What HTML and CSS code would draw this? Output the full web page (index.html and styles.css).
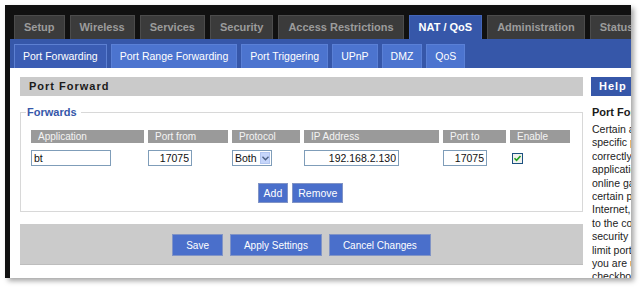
FILE: index.html
```html
<!DOCTYPE html>
<html lang="en">
  <head>
    <meta charset="UTF-8" />
    <title>NAT / QoS - Port Forwarding</title>
    <link rel="stylesheet" href="styles.css">
  </head>
  <body>
    <div class="window">
      <div class="tabs">
        <span class="tab">Setup</span>
        <span class="tab">Wireless</span>
        <span class="tab">Services</span>
        <span class="tab">Security</span>
        <span class="tab">Access Restrictions</span>
        <span class="tab tab-active">NAT / QoS</span>
        <span class="tab">Administration</span>
        <span class="tab">Status</span>
      </div>

      <div class="subtabs">
        <span class="subtab subtab-active">Port Forwarding</span>
        <span class="subtab">Port Range Forwarding</span>
        <span class="subtab">Port Triggering</span>
        <span class="subtab">UPnP</span>
        <span class="subtab">DMZ</span>
        <span class="subtab">QoS</span>
      </div>

      <div class="content">
        <div class="main">
          <h2 class="main-title">Port Forward</h2>

          <fieldset class="forwards">
            <legend class="forwards-legend">Forwards</legend>
            <div class="forwards-grid">
              <div class="forwards-th">Application</div>
              <div class="forwards-th">Port from</div>
              <div class="forwards-th">Protocol</div>
              <div class="forwards-th">IP Address</div>
              <div class="forwards-th">Port to</div>
              <div class="forwards-th">Enable</div>

              <div><input class="field field-app" type="text" value="bt" /></div>
              <div><input class="field field-port" type="text" value="17075" /></div>
              <div>
                <span class="select">
                  <span class="select-text">Both</span>
                  <span class="select-arrow">
                    <svg width="7" height="5" viewBox="0 0 7 5">
                      <path d="M0.5 0.8 L3.5 3.8 L6.5 0.8" fill="none" stroke="#4d6185" stroke-width="1.4" />
                    </svg>
                  </span>
                </span>
              </div>
              <div><input class="field field-ip" type="text" value="192.168.2.130" /></div>
              <div><input class="field field-port" type="text" value="17075" /></div>
              <div>
                <span class="checkbox">
                  <svg width="9" height="9" viewBox="0 0 9 9">
                    <path d="M1.5 4.2 L3.6 6.4 L7.5 2" fill="none" stroke="#21a121" stroke-width="1.6" />
                  </svg>
                </span>
              </div>
            </div>

            <div class="forwards-actions">
              <button class="button">Add</button>
              <button class="button">Remove</button>
            </div>
          </fieldset>

          <div class="submit-bar">
            <button class="button button-big">Save</button>
            <button class="button button-big">Apply Settings</button>
            <button class="button button-big">Cancel Changes</button>
          </div>
        </div>

        <div class="help">
          <h2 class="help-title">Help</h2>
          <h3 class="help-heading">Port Forwarding</h3>
          <p class="help-text">
            Certain applications may require to open<br />
            specific ports in order for it to function<br />
            correctly. Examples of these<br />
            applications include servers and certain<br />
            online games. When a request for a<br />
            certain port comes in from the<br />
            Internet, the router will route the data<br />
            to the computer you specify. Due to<br />
            security concerns, you may want to<br />
            limit port forwarding to only those ports<br />
            you are using, and uncheck the Enable<br />
            checkbox after you are finished.
          </p>
        </div>
      </div>
    </div>
  </body>
</html>
```

FILE: styles.css
```css
* {
  margin: 0;
  padding: 0;
  box-sizing: border-box;
  font-family: "Liberation Sans", Arial, sans-serif;
}

body {
  background: #fff;
  width: 640px;
  height: 289px;
  overflow: hidden;
}

.window {
  margin: 5px 0 0 5px;
  width: 626px;
  height: 273px;
  padding-left: 5px;
  background: #111;
  box-shadow: 3px 3px 5px rgba(0, 0, 0, 0.35);
  display: flex;
  flex-direction: column;
  overflow: hidden;
}

/* top level tabs */
.tabs {
  display: flex;
  gap: 5px;
  height: 34px;
  padding: 10px 0 0 4px;
  white-space: nowrap;
}

.tab {
  height: 24px;
  line-height: 23px;
  padding: 0 9px;
  background: #3b3b3b;
  border: 1px solid #4c4c4c;
  border-bottom: none;
  color: #9c9c9c;
  font-size: 11px;
  font-weight: bold;
  flex-shrink: 0;
}

.tab-active {
  background: #3657a9;
  border-color: #4466b8;
  color: #fff;
}

/* second level tabs */
.subtabs {
  display: flex;
  gap: 4px;
  height: 30px;
  padding: 5px 0 0 4px;
  background: #3657a9;
  white-space: nowrap;
}

.subtab {
  height: 24px;
  line-height: 23px;
  padding: 0 8px;
  background: #4c74cf;
  border: 1px solid #5a80d6;
  border-bottom: none;
  color: #fff;
  font-size: 10.5px;
  flex-shrink: 0;
}

.subtab-active {
  background: #3b5db4;
  border-color: #5d80d2;
}

.content {
  flex: 1;
  display: flex;
  gap: 8px;
  padding: 9px 0 0 10px;
  background: #fff;
}

.main {
  width: 563px;
  flex-shrink: 0;
}

.main-title {
  height: 19px;
  line-height: 19px;
  padding-left: 9px;
  background: #cacaca;
  color: #1b1b1b;
  font-size: 11px;
  font-weight: bold;
  letter-spacing: 1px;
}

/* forwards box */
.forwards {
  margin-top: 9px;
  padding: 11px 12px 8px 10px;
  border: 1px solid #d8d8d8;
}

.forwards-legend {
  margin-left: -5px;
  padding: 0 4px 0 1px;
  line-height: 14px;
  color: #3657a9;
  font-size: 11px;
  font-weight: bold;
}

.forwards-grid {
  display: grid;
  grid-template-columns: 113px 80px 68px 135px 63px 60px;
  column-gap: 4px;
  row-gap: 7px;
}

.forwards-th {
  height: 13px;
  line-height: 13px;
  padding-left: 7px;
  background: #9a9a9a;
  color: #f4f4f4;
  font-size: 10px;
}

.field {
  display: block;
  height: 16px;
  padding: 0 2px;
  border: 1px solid #7f9db9;
  background: #fff;
  color: #111;
  font-size: 10.5px;
  outline: none;
}

.field-app {
  width: 80px;
}

.field-port {
  width: 44px;
  text-align: right;
}

.field-ip {
  width: 95px;
  text-align: right;
}

.select {
  display: flex;
  align-items: center;
  justify-content: space-between;
  width: 40px;
  height: 16px;
  padding: 0 1px 0 2px;
  border: 1px solid #7f9db9;
  color: #111;
  font-size: 10.5px;
}

.select-arrow {
  display: flex;
  align-items: center;
  justify-content: center;
  width: 10px;
  height: 12px;
  background: #c6d6fb;
  border: 1px solid #b3c6f0;
}

.checkbox {
  display: flex;
  align-items: center;
  justify-content: center;
  width: 11px;
  height: 11px;
  margin: 3px 0 0 2px;
  border: 1px solid #1c5180;
  background: #f2f2ee;
}

.forwards-actions {
  display: flex;
  justify-content: center;
  gap: 4px;
  margin-top: 17px;
}

.button {
  height: 20px;
  padding: 0 5px;
  background: #4a6fcb;
  border: 1px solid #8194c6;
  color: #fff;
  font-size: 10.5px;
}

.button-big {
  height: 22px;
  padding: 0 13px;
  font-size: 10px;
}

.submit-bar {
  display: flex;
  justify-content: center;
  gap: 7px;
  height: 41px;
  margin-top: 12px;
  padding-top: 10px;
  background: #cbcbcb;
  border-bottom: 1px solid #bdbdbd;
}

/* help column */
.help {
  flex: 1;
  white-space: nowrap;
}

.help-title {
  height: 19px;
  line-height: 19px;
  padding-left: 8px;
  background: #3657a9;
  color: #fff;
  font-size: 11px;
  font-weight: bold;
  letter-spacing: 1px;
}

.help-heading {
  margin-top: 9px;
  padding-left: 1px;
  line-height: 14px;
  color: #1b1b1b;
  font-size: 11px;
  font-weight: bold;
}

.help-text {
  margin-top: 4px;
  padding-left: 1px;
  line-height: 13.4px;
  color: #222;
  font-size: 10.5px;
}
```
